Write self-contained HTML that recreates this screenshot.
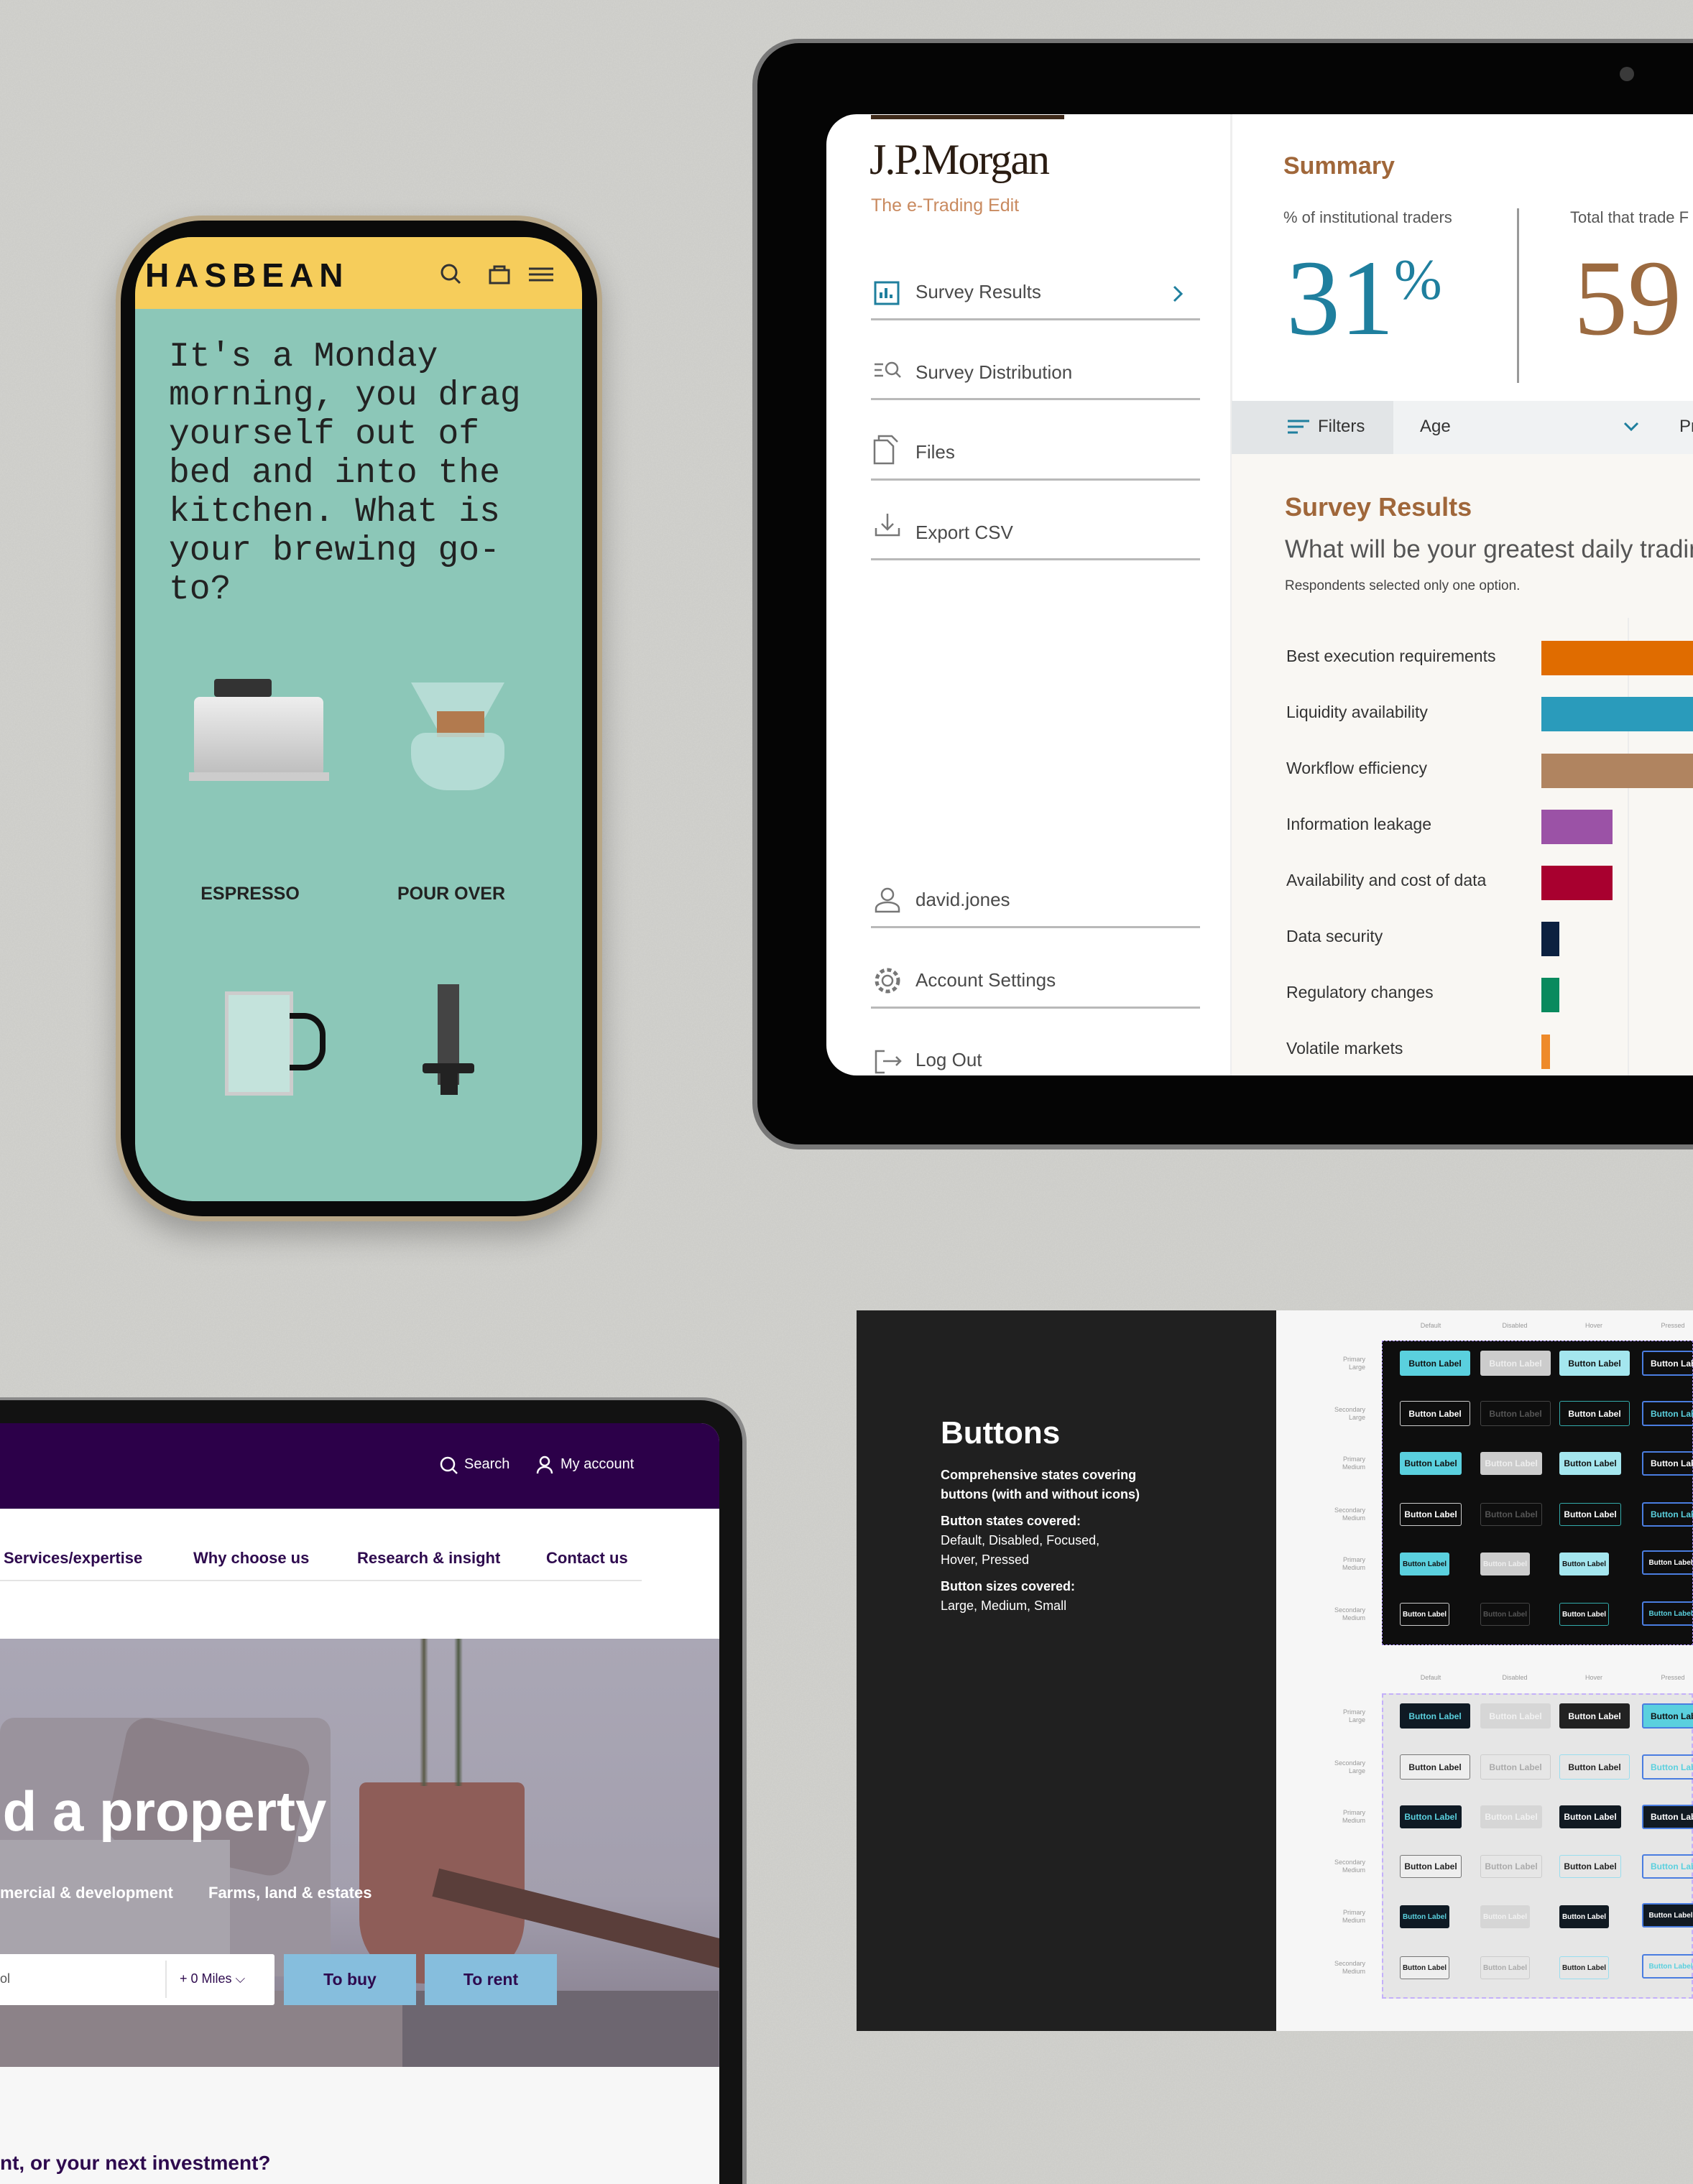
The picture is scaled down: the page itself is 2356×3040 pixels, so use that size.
<!DOCTYPE html>
<html><head><meta charset="utf-8"><style>
*{margin:0;padding:0;box-sizing:border-box}
html,body{width:2356px;height:3040px;overflow:hidden}
body{background:#c8c8c4;font-family:"Liberation Sans",sans-serif}
#w{position:relative;width:2356px;height:3040px;overflow:hidden}
.a{position:absolute}
.mono{font-family:"Liberation Mono",monospace}
.jm{color:#4a4a4a;font-size:26px}
.line{position:absolute;left:1212px;width:458px;height:3px;background:#b9b9b9}
.lbl{position:absolute;left:1790px;font-size:23px;color:#333}
.bar{position:absolute;left:2145px;height:48px}
.b{position:absolute;border-radius:3px;font-size:12px;display:flex;align-items:center;justify-content:center;font-weight:bold;white-space:nowrap;overflow:hidden}
.rl{position:absolute;left:1850px;width:50px;text-align:right;font-size:9px;color:#999;line-height:11px}
.ch{position:absolute;font-size:9px;color:#999;width:80px;text-align:center}
</style></head><body><div id="w">
<svg class="a" style="left:0;top:0" width="2356" height="3040"><filter id="n"><feTurbulence type="fractalNoise" baseFrequency="0.6" numOctaves="2"/><feColorMatrix values="0 0 0 0 0.78 0 0 0 0 0.78 0 0 0 0 0.76 0 0 0 0.5 0"/></filter><rect width="2356" height="3040" fill="#cbcbc7"/><rect width="2356" height="3040" filter="url(#n)" opacity="0.6"/></svg>

<!-- PHONE -->
<div class="a" style="left:161px;top:300px;width:677px;height:1400px;border-radius:120px;background:#b9a888;box-shadow:0 20px 40px rgba(0,0,0,.25)"></div>
<div class="a" style="left:168px;top:307px;width:663px;height:1386px;border-radius:114px;background:#0a0a0a"></div>
<div class="a" style="left:188px;top:330px;width:622px;height:1342px;border-radius:80px;background:#8cc7b8;overflow:hidden">
 <div class="a" style="left:0;top:0;width:622px;height:100px;background:#f6cd5b"></div>
 <div class="a" style="left:14px;top:26px;font-size:46px;font-weight:bold;letter-spacing:8px;color:#111">HASBEAN</div>
 <svg class="a" style="left:420px;top:32px" width="200" height="40"><circle cx="17" cy="17" r="10" fill="none" stroke="#333" stroke-width="3"/><line x1="24" y1="24" x2="32" y2="32" stroke="#333" stroke-width="3"/><path d="M74 14h26v18H74z M80 14v-5h14v5" fill="none" stroke="#333" stroke-width="3"/><path d="M128 12h34M128 20h34M128 28h34" stroke="#333" stroke-width="3"/></svg>
 <div class="a mono" style="left:47px;top:140px;font-size:48px;line-height:54px;color:#222;white-space:pre">It's a Monday
morning, you drag
yourself out of
bed and into the
kitchen. What is
your brewing go-
to?</div>
 <div class="a" style="left:82px;top:640px;width:180px;height:110px;background:linear-gradient(#eee,#bdbdbd);border-radius:8px"></div>
 <div class="a" style="left:110px;top:615px;width:80px;height:25px;background:#333;border-radius:4px"></div>
 <div class="a" style="left:75px;top:745px;width:195px;height:12px;background:#ccc"></div>
 <div class="a" style="left:384px;top:620px;width:130px;height:70px;background:rgba(200,230,225,.7);clip-path:polygon(0 0,100% 0,70% 100%,30% 100%)"></div>
 <div class="a" style="left:420px;top:660px;width:66px;height:36px;background:#b27a4e"></div>
 <div class="a" style="left:384px;top:690px;width:130px;height:80px;background:rgba(190,225,220,.8);border-radius:20px 20px 50px 50px"></div>
 <div class="a" style="left:0;top:900px;width:320px;text-align:center;font-size:25px;font-weight:bold;color:#222">ESPRESSO</div>
 <div class="a" style="left:290px;top:900px;width:300px;text-align:center;font-size:25px;font-weight:bold;color:#222">POUR OVER</div>
 <div class="a" style="left:125px;top:1050px;width:95px;height:145px;background:rgba(220,240,235,.7);border:5px solid #ccc"></div>
 <div class="a" style="left:215px;top:1080px;width:50px;height:80px;border:8px solid #111;border-left:none;border-radius:0 30px 30px 0"></div>
 <div class="a" style="left:421px;top:1040px;width:30px;height:140px;background:#444"></div>
 <div class="a" style="left:400px;top:1150px;width:72px;height:14px;background:#222;border-radius:4px"></div>
 <div class="a" style="left:425px;top:1164px;width:24px;height:30px;background:#222"></div>
</div>

<!-- JPM TABLET -->
<div class="a" style="left:1047px;top:54px;width:1400px;height:1546px;border-radius:64px;background:#777"></div>
<div class="a" style="left:1054px;top:60px;width:1400px;height:1533px;border-radius:58px;background:#050505"></div>
<div class="a" style="left:2254px;top:93px;width:20px;height:20px;border-radius:50%;background:#3a3a3a"></div>
<div class="a" style="left:1150px;top:159px;width:1206px;height:1338px;background:#fff;border-radius:42px 0 0 42px;overflow:hidden">
 <div class="a" style="left:562px;top:0;width:3px;height:1338px;background:#eee"></div>
</div>
<div class="a" style="left:1212px;top:160px;width:269px;height:6px;background:#3e2a1a"></div>
<div class="a" style="left:1210px;top:188px;font-family:'Liberation Serif',serif;font-size:60px;color:#2a1c12;letter-spacing:-2px">J.P.Morgan</div>
<div class="a" style="left:1212px;top:272px;font-size:25px;color:#c98a5f">The e-Trading Edit</div>
<svg class="a" style="left:1215px;top:385px" width="44" height="1120" fill="none" stroke="#777" stroke-width="2.5">
 <rect x="3" y="8" width="32" height="30" stroke="#1f7f9e" stroke-width="3"/><path d="M11 30v-8M18 30v-14M25 30v-5" stroke="#1f7f9e" stroke-width="4"/>
 <path d="M2 122h12M2 130h10M2 138h12"/><circle cx="26" cy="128" r="8"/><line x1="32" y1="134" x2="38" y2="140"/>
 <path d="M2 228h18l8 8v24H2z M8 228v-6h18l8 8"/>
 <path d="M20 330v22M12 344l8 8 8-8M4 350v10h32v-10"/>
 <circle cx="20" cy="860" r="8"/><path d="M4 880c0-12 32-12 32 0v4H4z"/>
 <circle cx="20" cy="980" r="7"/><circle cx="20" cy="980" r="15" stroke-dasharray="6 4" stroke-width="5"/>
 <path d="M16 1078H4v30h12M14 1092h24M32 1086l6 6-6 6"/>
</svg>
<div class="a jm" style="left:1274px;top:391px;">Survey Results</div>
<svg class="a" style="left:1630px;top:395px" width="20" height="30"><path d="M4 4l10 10-10 10" fill="none" stroke="#1f7f9e" stroke-width="3"/></svg>
<div class="line" style="top:443px"></div>
<div class="a jm" style="left:1274px;top:503px;">Survey Distribution</div>
<div class="line" style="top:554px"></div>
<div class="a jm" style="left:1274px;top:614px;">Files</div>
<div class="line" style="top:666px"></div>
<div class="a jm" style="left:1274px;top:726px;">Export CSV</div>
<div class="line" style="top:777px"></div>
<div class="a jm" style="left:1274px;top:1237px;">david.jones</div>
<div class="line" style="top:1289px"></div>
<div class="a jm" style="left:1274px;top:1349px;">Account Settings</div>
<div class="line" style="top:1401px"></div>
<div class="a jm" style="left:1274px;top:1460px;">Log Out</div>

<div class="a" style="left:1786px;top:212px;font-size:34px;font-weight:bold;color:#a0673a">Summary</div>
<div class="a" style="left:1786px;top:290px;font-size:22px;color:#555">% of institutional traders</div>
<div class="a" style="left:1790px;top:340px;font-family:'Liberation Serif',serif;font-size:150px;color:#1f7f9e;line-height:150px">31<span style="font-size:80px;vertical-align:top;line-height:100px">%</span></div>
<div class="a" style="left:2111px;top:290px;width:3px;height:243px;background:#999"></div>
<div class="a" style="left:2185px;top:290px;font-size:22px;color:#555;white-space:nowrap">Total that trade F</div>
<div class="a" style="left:2190px;top:340px;font-family:'Liberation Serif',serif;font-size:150px;color:#9b6a40;line-height:150px">59</div>
<div class="a" style="left:1714px;top:558px;width:642px;height:74px;background:#f0f2f3"></div>
<div class="a" style="left:1714px;top:558px;width:225px;height:74px;background:#e2e5e7"></div>
<svg class="a" style="left:1790px;top:582px" width="34" height="26"><path d="M2 4h30M2 12h22M2 20h14" stroke="#1f7f9e" stroke-width="3"/></svg>
<div class="a" style="left:1834px;top:580px;font-size:24px;color:#333">Filters</div>
<div class="a" style="left:1976px;top:580px;font-size:24px;color:#333">Age</div>
<svg class="a" style="left:2258px;top:586px" width="24" height="16"><path d="M3 3l9 9 9-9" fill="none" stroke="#1f7f9e" stroke-width="3"/></svg>
<div class="a" style="left:2337px;top:580px;font-size:24px;color:#333">Pr</div>
<div class="a" style="left:1714px;top:632px;width:642px;height:865px;background:#f9f7f3"></div>
<div class="a" style="left:1788px;top:685px;font-size:36px;font-weight:bold;color:#a0673a">Survey Results</div>
<div class="a" style="left:1788px;top:745px;font-size:35px;color:#555;white-space:nowrap">What will be your greatest daily trading</div>
<div class="a" style="left:1788px;top:805px;font-size:19px;color:#444">Respondents selected only one option.</div>
<div class="a" style="left:2265px;top:860px;width:2px;height:637px;background:#ececec"></div>
<div class="lbl" style="top:900px">Best execution requirements</div><div class="bar" style="top:892px;width:211px;background:#e06c00"></div>
<div class="lbl" style="top:978px">Liquidity availability</div><div class="bar" style="top:970px;width:211px;background:#2a9bbb"></div>
<div class="lbl" style="top:1056px">Workflow efficiency</div><div class="bar" style="top:1049px;width:211px;background:#b08460"></div>
<div class="lbl" style="top:1134px">Information leakage</div><div class="bar" style="top:1127px;width:99px;background:#9b52a6"></div>
<div class="lbl" style="top:1212px">Availability and cost of data</div><div class="bar" style="top:1205px;width:99px;background:#a8002f"></div>
<div class="lbl" style="top:1290px">Data security</div><div class="bar" style="top:1283px;width:25px;background:#0c2140"></div>
<div class="lbl" style="top:1368px">Regulatory changes</div><div class="bar" style="top:1361px;width:25px;background:#0a8a5e"></div>
<div class="lbl" style="top:1446px">Volatile markets</div><div class="bar" style="top:1440px;width:12px;background:#ee8a2a"></div>

<!-- BUTTONS PANEL -->
<div class="a" style="left:1192px;top:1824px;width:584px;height:1003px;background:#202020"></div>
<div class="a" style="left:1776px;top:1824px;width:580px;height:1003px;background:#f6f6f6"></div>
<div class="a" style="left:1309px;top:1970px;font-size:44px;font-weight:bold;color:#fff">Buttons</div>
<div class="a" style="left:1309px;top:2040px;font-size:18px;line-height:27px;color:#fff;width:330px">
<b>Comprehensive states covering buttons (with and without icons)</b>
<div style="margin-top:10px"><b>Button states covered:</b><br>Default, Disabled, Focused,<br>Hover, Pressed</div>
<div style="margin-top:10px"><b>Button sizes covered:</b><br>Large, Medium, Small</div></div>
<div class="a" style="left:1923px;top:1866px;width:433px;height:424px;background:#0e0e0e;border:1px dashed #a78bfa"></div>
<div class="a" style="left:1923px;top:2357px;width:433px;height:425px;background:#e6e6e6;border:2px dashed #c4b0fa"></div>
<div class="ch" style="left:1951px;top:1840px">Default</div><div class="ch" style="left:2068px;top:1840px">Disabled</div><div class="ch" style="left:2178px;top:1840px">Hover</div><div class="ch" style="left:2288px;top:1840px">Pressed</div>
<div class="ch" style="left:1951px;top:2330px">Default</div><div class="ch" style="left:2068px;top:2330px">Disabled</div><div class="ch" style="left:2178px;top:2330px">Hover</div><div class="ch" style="left:2288px;top:2330px">Pressed</div>

<div class="b" style="left:1948px;top:1880px;width:98px;height:35px;background:#5ad0de;color:#111">Button Label</div>
<div class="b" style="left:2060px;top:1880px;width:98px;height:35px;background:#ccc;color:#eee">Button Label</div>
<div class="b" style="left:2170px;top:1880px;width:98px;height:35px;background:#a4e6ee;color:#111">Button Label</div>
<div class="b" style="left:2285px;top:1880px;width:80px;height:35px;border:2px solid #4a7de0;color:#fff;justify-content:flex-start;padding-left:10px">Button Lab</div>
<div class="b" style="left:1948px;top:1950px;width:98px;height:35px;border:1px solid #ccc;color:#fff">Button Label</div>
<div class="b" style="left:2060px;top:1950px;width:98px;height:35px;border:1px solid #444;color:#555">Button Label</div>
<div class="b" style="left:2170px;top:1950px;width:98px;height:35px;border:1px solid #3aa;color:#fff">Button Label</div>
<div class="b" style="left:2285px;top:1950px;width:80px;height:35px;border:2px solid #4a7de0;color:#5ad0de;justify-content:flex-start;padding-left:10px">Button Lab</div>
<div class="b" style="left:1948px;top:2021px;width:86px;height:32px;background:#5ad0de;color:#111">Button Label</div>
<div class="b" style="left:2060px;top:2021px;width:86px;height:32px;background:#ccc;color:#eee">Button Label</div>
<div class="b" style="left:2170px;top:2021px;width:86px;height:32px;background:#a4e6ee;color:#111">Button Label</div>
<div class="b" style="left:2285px;top:2020px;width:80px;height:34px;border:2px solid #4a7de0;color:#fff;justify-content:flex-start;padding-left:10px">Button Labe</div>
<div class="b" style="left:1948px;top:2092px;width:86px;height:32px;border:1px solid #ccc;color:#fff">Button Label</div>
<div class="b" style="left:2060px;top:2092px;width:86px;height:32px;border:1px solid #444;color:#555">Button Label</div>
<div class="b" style="left:2170px;top:2092px;width:86px;height:32px;border:1px solid #3aa;color:#fff">Button Label</div>
<div class="b" style="left:2285px;top:2091px;width:80px;height:34px;border:2px solid #4a7de0;color:#5ad0de;justify-content:flex-start;padding-left:10px">Button Labe</div>
<div class="b" style="left:1948px;top:2161px;width:69px;height:32px;background:#5ad0de;color:#111;font-size:10px">Button Label</div>
<div class="b" style="left:2060px;top:2161px;width:69px;height:32px;background:#ccc;color:#eee;font-size:10px">Button Label</div>
<div class="b" style="left:2170px;top:2161px;width:69px;height:32px;background:#a4e6ee;color:#111;font-size:10px">Button Label</div>
<div class="b" style="left:2285px;top:2158px;width:80px;height:34px;border:2px solid #4a7de0;color:#fff;font-size:10px">Button Label</div>
<div class="b" style="left:1948px;top:2231px;width:69px;height:32px;border:1px solid #ccc;color:#fff;font-size:10px">Button Label</div>
<div class="b" style="left:2060px;top:2231px;width:69px;height:32px;border:1px solid #444;color:#555;font-size:10px">Button Label</div>
<div class="b" style="left:2170px;top:2231px;width:69px;height:32px;border:1px solid #3aa;color:#fff;font-size:10px">Button Label</div>
<div class="b" style="left:2285px;top:2229px;width:80px;height:34px;border:2px solid #4a7de0;color:#5ad0de;font-size:10px">Button Label</div>

<div class="b" style="left:1948px;top:2371px;width:98px;height:35px;background:#0f1a24;color:#5ad0de">Button Label</div>
<div class="b" style="left:2060px;top:2371px;width:98px;height:35px;background:#d6d6d6;color:#f2f2f2">Button Label</div>
<div class="b" style="left:2170px;top:2371px;width:98px;height:35px;background:#222;color:#fff">Button Label</div>
<div class="b" style="left:2285px;top:2371px;width:80px;height:35px;background:#5ad0de;border:2px solid #4a7de0;color:#111;justify-content:flex-start;padding-left:10px">Button Lab</div>
<div class="b" style="left:1948px;top:2442px;width:98px;height:35px;border:1px solid #777;color:#222;background:#eee">Button Label</div>
<div class="b" style="left:2060px;top:2442px;width:98px;height:35px;border:1px solid #ccc;color:#aaa">Button Label</div>
<div class="b" style="left:2170px;top:2442px;width:98px;height:35px;border:1px solid #9de;color:#222">Button Label</div>
<div class="b" style="left:2285px;top:2442px;width:80px;height:35px;border:2px solid #4a7de0;color:#5ad0de;justify-content:flex-start;padding-left:10px">Button Lab</div>
<div class="b" style="left:1948px;top:2513px;width:86px;height:32px;background:#0f1a24;color:#5ad0de">Button Label</div>
<div class="b" style="left:2060px;top:2513px;width:86px;height:32px;background:#d6d6d6;color:#f2f2f2">Button Label</div>
<div class="b" style="left:2170px;top:2513px;width:86px;height:32px;background:#111a22;color:#fff">Button Label</div>
<div class="b" style="left:2285px;top:2512px;width:80px;height:34px;background:#111a22;border:2px solid #4a7de0;color:#fff;justify-content:flex-start;padding-left:10px">Button Labe</div>
<div class="b" style="left:1948px;top:2582px;width:86px;height:32px;border:1px solid #777;color:#222;background:#eee">Button Label</div>
<div class="b" style="left:2060px;top:2582px;width:86px;height:32px;border:1px solid #ccc;color:#aaa">Button Label</div>
<div class="b" style="left:2170px;top:2582px;width:86px;height:32px;border:1px solid #9de;color:#222">Button Label</div>
<div class="b" style="left:2285px;top:2581px;width:80px;height:34px;border:2px solid #4a7de0;color:#5ad0de;justify-content:flex-start;padding-left:10px">Button Labe</div>
<div class="b" style="left:1948px;top:2652px;width:69px;height:32px;background:#0f1a24;color:#5ad0de;font-size:10px">Button Label</div>
<div class="b" style="left:2060px;top:2652px;width:69px;height:32px;background:#d6d6d6;color:#f2f2f2;font-size:10px">Button Label</div>
<div class="b" style="left:2170px;top:2652px;width:69px;height:32px;background:#111a22;color:#fff;font-size:10px">Button Label</div>
<div class="b" style="left:2285px;top:2649px;width:80px;height:34px;background:#111a22;border:2px solid #4a7de0;color:#fff;font-size:10px">Button Label</div>
<div class="b" style="left:1948px;top:2723px;width:69px;height:32px;border:1px solid #777;color:#222;background:#eee;font-size:10px">Button Label</div>
<div class="b" style="left:2060px;top:2723px;width:69px;height:32px;border:1px solid #ccc;color:#aaa;font-size:10px">Button Label</div>
<div class="b" style="left:2170px;top:2723px;width:69px;height:32px;border:1px solid #9de;color:#222;font-size:10px">Button Label</div>
<div class="b" style="left:2285px;top:2720px;width:80px;height:34px;border:2px solid #4a7de0;color:#5ad0de;font-size:10px">Button Label</div>
<div class="rl" style="top:1887px">Primary<br>Large</div><div class="rl" style="top:1957px">Secondary<br>Large</div><div class="rl" style="top:2026px">Primary<br>Medium</div><div class="rl" style="top:2097px">Secondary<br>Medium</div><div class="rl" style="top:2166px">Primary<br>Medium</div><div class="rl" style="top:2236px">Secondary<br>Medium</div>
<div class="rl" style="top:2378px">Primary<br>Large</div><div class="rl" style="top:2449px">Secondary<br>Large</div><div class="rl" style="top:2518px">Primary<br>Medium</div><div class="rl" style="top:2587px">Secondary<br>Medium</div><div class="rl" style="top:2657px">Primary<br>Medium</div><div class="rl" style="top:2728px">Secondary<br>Medium</div>

<!-- PROPERTY TABLET -->
<div class="a" style="left:-100px;top:1945px;width:1139px;height:1100px;border-radius:0 62px 0 0;background:#8a8a8a"></div>
<div class="a" style="left:-100px;top:1949px;width:1133px;height:1100px;border-radius:0 58px 0 0;background:#121212"></div>
<div class="a" style="left:0;top:1981px;width:1001px;height:1059px;border-radius:0 26px 0 0;background:#f7f7f7;overflow:hidden">
 <div class="a" style="left:0;top:0;width:1001px;height:119px;background:#2c0049"></div>
 <svg class="a" style="left:611px;top:45px" width="30" height="30" fill="none" stroke="#fff" stroke-width="2.5"><circle cx="12" cy="12" r="9"/><line x1="19" y1="19" x2="25" y2="25"/></svg>
 <div class="a" style="left:646px;top:46px;font-size:20px;color:#fff">Search</div>
 <svg class="a" style="left:745px;top:44px" width="26" height="30" fill="none" stroke="#fff" stroke-width="2.5"><circle cx="13" cy="9" r="6"/><path d="M3 26c0-12 20-12 20 0"/></svg>
 <div class="a" style="left:780px;top:46px;font-size:20px;color:#fff">My account</div>
 <div class="a" style="left:0;top:119px;width:1001px;height:181px;background:#fff"></div>
 <div class="a" style="left:5px;top:175px;font-size:22px;font-weight:bold;color:#2e0a4e">Services/expertise</div>
 <div class="a" style="left:269px;top:175px;font-size:22px;font-weight:bold;color:#2e0a4e">Why choose us</div>
 <div class="a" style="left:497px;top:175px;font-size:22px;font-weight:bold;color:#2e0a4e">Research &amp; insight</div>
 <div class="a" style="left:760px;top:175px;font-size:22px;font-weight:bold;color:#2e0a4e">Contact us</div>
 <div class="a" style="left:0;top:218px;width:893px;height:2px;background:#e4e4e4"></div>
 <div class="a" style="left:0;top:300px;width:1001px;height:596px;background:linear-gradient(180deg,#aaa7b5 0%,#a39fae 60%,#7f7686 100%);overflow:hidden">
  <div class="a" style="left:0;top:110px;width:460px;height:360px;background:#9a939d;border-radius:20px"></div>
  <div class="a" style="left:160px;top:130px;width:260px;height:180px;background:#8b8088;border-radius:30px;transform:rotate(12deg)"></div>
  <div class="a" style="left:0;top:280px;width:320px;height:200px;background:#a8a4ac"></div>
  <div class="a" style="left:500px;top:200px;width:230px;height:280px;background:#8e5d58;border-radius:10px 10px 90px 90px"></div>
  <div class="a" style="left:560px;top:0;width:120px;height:205px;background:linear-gradient(90deg,transparent 20%,#5a5a48 25%,transparent 30%,transparent 60%,#4f5a44 65%,transparent 70%)"></div>
  <div class="a" style="left:600px;top:370px;width:420px;height:40px;background:#5a3e3a;transform:rotate(14deg)"></div>
  <div class="a" style="left:560px;top:490px;width:440px;height:106px;background:#6d6670"></div>
  <div class="a" style="left:0;top:490px;width:560px;height:106px;background:#8c8288"></div>
 </div>
 <div class="a" style="left:-44px;top:495px;font-size:78px;font-weight:bold;color:#fff;white-space:nowrap">nd a property</div>
 <div class="a" style="left:0;top:641px;font-size:22px;font-weight:bold;color:#fff;white-space:nowrap">mercial &amp; development</div>
 <div class="a" style="left:290px;top:641px;font-size:22px;font-weight:bold;color:#fff;white-space:nowrap">Farms, land &amp; estates</div>
 <div class="a" style="left:0;top:739px;width:382px;height:71px;background:#fff;border-radius:0 3px 3px 0"></div>
 <div class="a" style="left:230px;top:748px;width:2px;height:52px;background:#e4e4e4"></div>
 <div class="a" style="left:0;top:763px;font-size:18px;color:#555">ol</div>
 <div class="a" style="left:250px;top:763px;font-size:18px;color:#2e0a4e">+ 0 Miles ⌵</div>
 <div class="a" style="left:395px;top:739px;width:184px;height:71px;background:#86bedd;display:flex;align-items:center;justify-content:center;font-size:23px;font-weight:bold;color:#2e0a4e">To buy</div>
 <div class="a" style="left:591px;top:739px;width:184px;height:71px;background:#86bedd;display:flex;align-items:center;justify-content:center;font-size:23px;font-weight:bold;color:#2e0a4e">To rent</div>
 <div class="a" style="left:0;top:1014px;font-size:28px;font-weight:bold;color:#2e0a4e;white-space:nowrap">nt, or your next investment?</div>
</div>
</div></body></html>
